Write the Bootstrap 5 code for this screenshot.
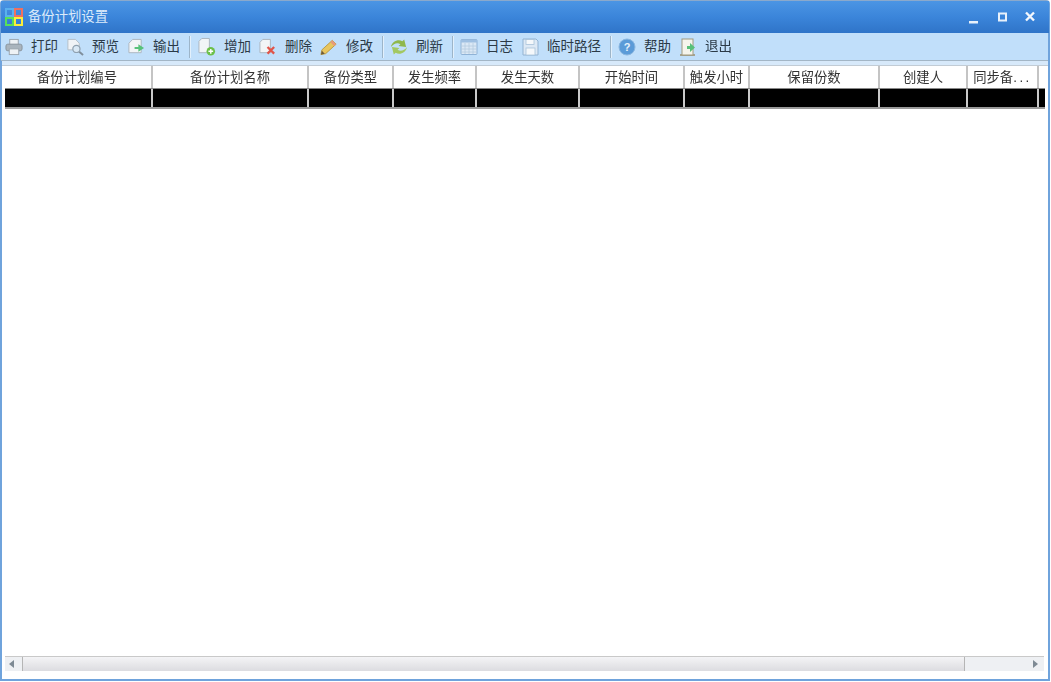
<!DOCTYPE html>
<html lang="zh-CN">
<head>
  <meta charset="UTF-8">
  <meta name="viewport" content="width=device-width, initial-scale=1.0">
  <title>备份计划设置</title>
  <link href="https://cdn.jsdelivr.net/npm/bootstrap@5.3.0/dist/css/bootstrap.min.css" rel="stylesheet">
  <style>
    html, body { height: 682px; overflow: hidden; background: #fff; }
    body { font-family: "Liberation Sans", "Noto Sans CJK SC", sans-serif; color: #333; }
    /* the reference is a slightly soft, upscaled capture */
    .win-frame { width: 1050px; height: 681px; border: 2px solid #6fa3dc; border-top: 1px solid #8aa9cc; border-radius: 4px 4px 0 0; filter: blur(.35px); }
    .win-title { height: 32px; margin: 0 -1px; padding: 0 5px 0 3px; background: linear-gradient(#4b95e4, #3b85da 50%, #2f74c8); color: #dcebfa; font-size: 13.33px; }
    .win-title .app-logo { margin-right: 4px; }
    .win-btn { width: 28px; height: 20px; }
    .tool-bar { height: 28px; margin-left: -1px; padding-top: 1px; background: #c1dffa; font-size: 13.5px; color: #2b3a47; border-bottom: 1px solid #a3b6c6; }
    .tool-btn { gap: 8px; padding: 0 4px; white-space: nowrap; }
    .tool-btn svg { width: 18px; flex: none; }
    .tool-sep { width: 2px; height: 22px; margin: 0 3px 0 5px; background: #9db5c9; border-right: 1px solid #e2f0fc; }
    .tool-sep.sep-tight { margin-right: 2px; }
    .tool-gap { height: 5px; background: #d7e9fa; border-bottom: 1px solid #c2ccd5; }
    .grid-area { margin-left: 1px; min-height: 0; }
    .grid-head { height: 22px; font-size: 13.33px; color: #333; }
    .grid-row { height: 21px; width: 1040px; margin-left: 2px; background: #000; border-top: 1px solid #888; border-bottom: 2px solid #999; }
    .grid-cell { flex: none; text-align: center; line-height: 24px; white-space: nowrap; overflow: hidden; border-right: 2px solid #c4c4c4; }
    .grid-dots { letter-spacing: 2.5px; }
    .grid-fill { flex: none; height: 100%; border-right: 2px solid #c9c9c9; }
    .grid-body { height: 547px; }
    .h-scroll { height: 15px; width: 1039px; margin-left: 2px; background: #eef0f3; border-top: 1px solid #c9c9c9; }
    .scroll-left { width: 17px; }
    .scroll-thumb { width: 943px; height: 14px; background: linear-gradient(#f4f4f6, #dcdce0); border-left: 1px solid #b5b5b5; border-right: 1px solid #b5b5b5; }
    .scroll-arrow { width: 0; height: 0; border-top: 4px solid transparent; border-bottom: 4px solid transparent; }
    .arrow-l { border-right: 5px solid #7e8a94; margin-left: 4px; }
    .arrow-r { border-left: 5px solid #7e8a94; margin-right: 6px; }
    .col-w1 { width: 150px; } .col-w2 { width: 156px; } .col-w3 { width: 85px; } .col-w4 { width: 83px; }
    .col-w5 { width: 103px; } .col-w6 { width: 105px; } .col-w7 { width: 65px; } .col-w8 { width: 130px; }
    .col-w9 { width: 88px; } .col-w10 { width: 71px; }
    .grid-row .col-w1 { width: 148px; }
  </style>
</head>
<body>
  <div class="win-frame d-flex flex-column">
    <div class="win-title d-flex align-items-center">
      <svg class="app-logo" width="20" height="20" viewBox="0 0 20 20">
        <rect x="2" y="2" width="7" height="7" fill="none" stroke="#5ab0ee" stroke-width="2"/>
        <rect x="11" y="2" width="7" height="7" fill="none" stroke="#ee7060" stroke-width="2"/>
        <rect x="2" y="11" width="7" height="7" fill="none" stroke="#58e05a" stroke-width="2"/>
        <rect x="11" y="11" width="7" height="7" fill="none" stroke="#fbee3a" stroke-width="2"/>
      </svg>
      <span>备份计划设置</span>
      <div class="ms-auto d-flex">
        <svg class="win-btn" viewBox="0 0 28 20"><rect x="9" y="14" width="9" height="2.5" fill="#e8f1fb"/></svg>
        <svg class="win-btn" viewBox="0 0 28 20"><rect x="11" y="6.5" width="7" height="7" fill="none" stroke="#e8f1fb" stroke-width="2"/></svg>
        <svg class="win-btn" viewBox="0 0 28 20"><path d="M10 5.5l8 8M18 5.5l-8 8" stroke="#f2f7fd" stroke-width="2.4"/></svg>
      </div>
    </div>

    <div class="tool-bar d-flex align-items-center">
      <div class="tool-btn d-flex align-items-center">
        <svg height="18" viewBox="0 0 19 18"><rect x="5" y="1" width="9" height="6" fill="#eef2f5" stroke="#9aa5ae"/><rect x="1" y="6" width="17" height="7" rx="2" fill="#a9b4bd" stroke="#87939c"/><rect x="4.5" y="11" width="10" height="6" fill="#eef2f5" stroke="#9aa5ae"/></svg>
        <span>打印</span>
      </div>
      <div class="tool-btn d-flex align-items-center">
        <svg height="18" viewBox="0 0 19 18"><path d="M2 1h8l4 4v7H2z" fill="#f0f3f6" stroke="#b4bec7"/><circle cx="11" cy="11" r="3.8" fill="#d8e8f5" stroke="#8fa1b0" stroke-width="1.3"/><path d="M14 14l4 3.5" stroke="#7f8e9b" stroke-width="2"/></svg>
        <span>预览</span>
      </div>
      <div class="tool-btn d-flex align-items-center">
        <svg height="18" viewBox="0 0 19 18"><path d="M2 5l4-4h9v14H2z" fill="#f2f5f7" stroke="#aab5be"/><path d="M8 9h4V6l6 4-6 4v-3H8z" fill="#57c27a"/></svg>
        <span>输出</span>
      </div>
      <div class="tool-sep"></div>
      <div class="tool-btn d-flex align-items-center">
        <svg height="20" viewBox="0 0 19 20"><path d="M1 4l3-3h8v15H1z" fill="#f2f5f7" stroke="#aab5be"/><circle cx="13.5" cy="14.5" r="4.5" fill="#6cc04a"/><path d="M11 14.5h5M13.5 12v5" stroke="#fff" stroke-width="1.5"/></svg>
        <span>增加</span>
      </div>
      <div class="tool-btn d-flex align-items-center">
        <svg height="18" viewBox="0 0 19 18"><path d="M1 4l3-3h8v14H1z" fill="#f2f5f7" stroke="#aab5be"/><path d="M9 9l7 7M16 9l-7 7" stroke="#e0554a" stroke-width="2.4"/></svg>
        <span>删除</span>
      </div>
      <div class="tool-btn d-flex align-items-center">
        <svg height="18" viewBox="0 0 19 18"><path d="M13 2l4 4L6 16l-5 1 1-5z" fill="#e8c65f" stroke="#b99a45"/><path d="M13 2l4 4-2 2-4-4z" fill="#e79a7c"/><path d="M1 17l1-4 3 3z" fill="#6d5a3a"/></svg>
        <span>修改</span>
      </div>
      <div class="tool-sep sep-tight"></div>
      <div class="tool-btn d-flex align-items-center">
        <svg height="18" viewBox="0 0 19 18"><path d="M1 9C2 3 9 0 13 3l2-2 2 8-8-1 2-2C8 4 4 5 1 9z" fill="#8fb84a"/><path d="M18 9c-1 6-8 9-12 6l-2 2-2-8 8 1-2 2c3 2 7 1 10-3z" fill="#a3c862"/></svg>
        <span>刷新</span>
      </div>
      <div class="tool-sep sep-tight"></div>
      <div class="tool-btn d-flex align-items-center">
        <svg height="18" viewBox="0 0 18 18"><rect x="1" y="1.5" width="16" height="15" rx="1" fill="#dbe8f5" stroke="#8fb2d6"/><rect x="1" y="1.5" width="16" height="3" fill="#9fc0e2"/><path d="M5 5v11M9 5v11M13 5v11M1 8h16M1 11h16M1 14h16" stroke="#b5cbe0" stroke-width=".8"/></svg>
        <span>日志</span>
      </div>
      <div class="tool-btn d-flex align-items-center">
        <svg height="18" viewBox="0 0 18 18"><path d="M2 1h13l2 2v14H2z" fill="#dde9f5" stroke="#93b3d2"/><rect x="5" y="1.5" width="8" height="5" fill="#f5f8fb" stroke="#a9c2da" stroke-width=".8"/><rect x="5" y="10" width="9" height="7" fill="#f5f8fb" stroke="#a9c2da" stroke-width=".8"/></svg>
        <span>临时路径</span>
      </div>
      <div class="tool-sep sep-tight"></div>
      <div class="tool-btn d-flex align-items-center">
        <svg height="18" viewBox="0 0 18 18"><circle cx="9" cy="9" r="8" fill="#5b9bd8" stroke="#8ab6e0"/><text x="9" y="13" font-size="11" font-family="Liberation Sans, sans-serif" font-weight="700" text-anchor="middle" fill="#e8f2fb">?</text></svg>
        <span>帮助</span>
      </div>
      <div class="tool-btn d-flex align-items-center">
        <svg height="18" viewBox="0 0 18 18"><path d="M1 17h15" stroke="#9a8f6e" stroke-width="1.5"/><rect x="3" y="1" width="11" height="16" fill="#f5f4ec" stroke="#a09a80"/><path d="M8 8h3V5l5 4.5-5 4.5v-3H8z" fill="#58c07a"/></svg>
        <span>退出</span>
      </div>
    </div>
    <div class="tool-gap"></div>

    <div class="grid-area flex-grow-1 d-flex flex-column">
      <div class="grid-head d-flex">
        <div class="grid-cell col-w1">备份计划编号</div>
        <div class="grid-cell col-w2">备份计划名称</div>
        <div class="grid-cell col-w3">备份类型</div>
        <div class="grid-cell col-w4">发生频率</div>
        <div class="grid-cell col-w5">发生天数</div>
        <div class="grid-cell col-w6">开始时间</div>
        <div class="grid-cell col-w7">触发小时</div>
        <div class="grid-cell col-w8">保留份数</div>
        <div class="grid-cell col-w9">创建人</div>
        <div class="grid-cell col-w10">同步备<span class="grid-dots">...</span></div>
      </div>
      <div class="grid-row d-flex">
        <div class="grid-fill col-w1"></div>
        <div class="grid-fill col-w2"></div>
        <div class="grid-fill col-w3"></div>
        <div class="grid-fill col-w4"></div>
        <div class="grid-fill col-w5"></div>
        <div class="grid-fill col-w6"></div>
        <div class="grid-fill col-w7"></div>
        <div class="grid-fill col-w8"></div>
        <div class="grid-fill col-w9"></div>
        <div class="grid-fill col-w10"></div>
      </div>
      <div class="grid-body"></div>
      <div class="h-scroll d-flex align-items-center">
        <div class="scroll-left d-flex align-items-center"><div class="scroll-arrow arrow-l"></div></div>
        <div class="scroll-thumb"></div>
        <div class="scroll-arrow arrow-r ms-auto"></div>
      </div>
    </div>
  </div>
  <script src="https://cdn.jsdelivr.net/npm/bootstrap@5.3.0/dist/js/bootstrap.bundle.min.js"></script>
</body>
</html>
